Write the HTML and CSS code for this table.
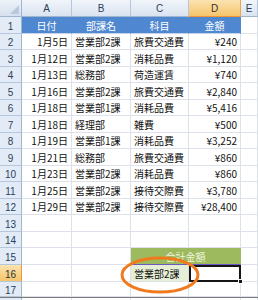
FILE: index.html
```html
<!DOCTYPE html>
<html lang="ja">
<head>
<meta charset="utf-8">
<link rel="stylesheet" href="styles.css">
</head>
<body>
<div class="sheet">
  <div class="corner"><span class="tri"></span></div>
  <div class="ch">A</div><div class="ch">B</div><div class="ch">C</div><div class="ch sel">D</div><div class="ch">E</div>

  <div class="rh">1</div><div class="c hd">日付</div><div class="c hd">部課名</div><div class="c hd">科目</div><div class="c hd">金額</div><div class="c"></div>

  <div class="rh">2</div><div class="c r">1月5日</div><div class="c l">営業部2課</div><div class="c l">旅費交通費</div><div class="c r">¥240</div><div class="c"></div>
  <div class="rh">3</div><div class="c r">1月12日</div><div class="c l">営業部2課</div><div class="c l">消耗品費</div><div class="c r">¥1,120</div><div class="c"></div>
  <div class="rh">4</div><div class="c r">1月13日</div><div class="c l">総務部</div><div class="c l">荷造運賃</div><div class="c r">¥740</div><div class="c"></div>
  <div class="rh">5</div><div class="c r">1月16日</div><div class="c l">営業部2課</div><div class="c l">旅費交通費</div><div class="c r">¥2,840</div><div class="c"></div>
  <div class="rh">6</div><div class="c r">1月18日</div><div class="c l">営業部1課</div><div class="c l">消耗品費</div><div class="c r">¥5,416</div><div class="c"></div>
  <div class="rh">7</div><div class="c r">1月18日</div><div class="c l">経理部</div><div class="c l">雑費</div><div class="c r">¥500</div><div class="c"></div>
  <div class="rh">8</div><div class="c r">1月19日</div><div class="c l">営業部1課</div><div class="c l">消耗品費</div><div class="c r">¥3,252</div><div class="c"></div>
  <div class="rh">9</div><div class="c r">1月21日</div><div class="c l">総務部</div><div class="c l">旅費交通費</div><div class="c r">¥860</div><div class="c"></div>
  <div class="rh">10</div><div class="c r">1月23日</div><div class="c l">営業部2課</div><div class="c l">消耗品費</div><div class="c r">¥860</div><div class="c"></div>
  <div class="rh">11</div><div class="c r">1月25日</div><div class="c l">営業部2課</div><div class="c l">接待交際費</div><div class="c r">¥3,780</div><div class="c"></div>
  <div class="rh">12</div><div class="c r">1月29日</div><div class="c l">営業部2課</div><div class="c l">接待交際費</div><div class="c r">¥28,400</div><div class="c"></div>

  <div class="rh">13</div><div class="c"></div><div class="c"></div><div class="c"></div><div class="c"></div><div class="c"></div>
  <div class="rh">14</div><div class="c"></div><div class="c"></div><div class="c"></div><div class="c"></div><div class="c"></div>
  <div class="rh">15</div><div class="c"></div><div class="c"></div><div class="c total">合計金額</div><div class="c"></div>
  <div class="rh sel">16</div><div class="c"></div><div class="c"></div><div class="c lg">営業部2課</div><div class="c active"><span class="handle"></span></div><div class="c"></div>
  <div class="rh">17</div><div class="c"></div><div class="c"></div><div class="c"></div><div class="c"></div><div class="c"></div>
  <div class="edge"></div>
  <div class="rh">18</div><div class="c"></div><div class="c"></div><div class="c"></div><div class="c"></div><div class="c"></div>

  <svg class="ring" width="258" height="300" viewBox="0 0 258 300">
    <ellipse cx="160" cy="275" rx="38" ry="17" fill="none" stroke="#f07a1e" stroke-width="3"/>
  </svg>
</div>
</body>
</html>
```

FILE: styles.css
```css
* { box-sizing: border-box; }
html, body { margin: 0; padding: 0; background: #fff; }
body { width: 258px; height: 300px; overflow: hidden; }

.sheet {
  position: relative;
  display: grid;
  grid-template-columns: 22px 50px 59px 58px 52px 17px;
  grid-template-rows: 17px 17px 16px 17px 16px 17px 16px 17px 16px 17px 16px 17px 16px 17px 16px 17px 17px 15px 1px 16px;
  font-family: "Noto Sans CJK JP", "Liberation Sans", sans-serif;
  font-size: 10px;
  color: #111;
}

.corner {
  position: relative;
  background: linear-gradient(#eef3fa, #d6e0ee);
  border-right: 1px solid #9eb6ce;
  border-bottom: 1px solid #9eb6ce;
}
.tri {
  position: absolute;
  right: 2px;
  bottom: 2px;
  width: 0;
  height: 0;
  border-left: 9px solid transparent;
  border-bottom: 9px solid #b8c9de;
}

.ch {
  display: flex;
  align-items: center;
  justify-content: center;
  background: linear-gradient(#f1f5fb, #d9e3f0);
  border-right: 1px solid #b5c7dc;
  border-bottom: 1px solid #9eb6ce;
  color: #2b3f5c;
  font-family: "Liberation Sans", sans-serif;
  font-size: 10px;
}
.ch.sel {
  background: linear-gradient(#fbe3b1, #f6c56b);
  border-right-color: #f0a64a;
  border-bottom-color: #f29536;
  color: #333;
}

.rh {
  display: flex;
  align-items: center;
  justify-content: center;
  background: #e3ebf6;
  border-right: 1px solid #9eb6ce;
  border-bottom: 1px solid #b5c7dc;
  color: #2b3f5c;
  font-family: "Liberation Sans", sans-serif;
  font-size: 10px;
  padding-top: 2px;
}
.rh.sel {
  background: linear-gradient(#fbe3b1, #f6c56b);
  border-right-color: #f29536;
  color: #333;
}

.c {
  display: flex;
  align-items: center;
  border-right: 1px solid #dde2ea;
  border-bottom: 1px solid #dde2ea;
  white-space: nowrap;
  overflow: visible;
  padding: 0 3px;
}
.c.r { justify-content: flex-end; }
.c.l { justify-content: flex-start; }

.c.hd {
  justify-content: center;
  background: #4f88d0;
  color: #fff;
  border-right-color: #4f88d0;
  border-bottom-color: #c9d5e6;
}

.c.total {
  grid-column: span 2;
  justify-content: center;
  background: #9dbb5e;
  color: #eef5df;
  border-right-color: #9dbb5e;
  border-bottom: 1px solid #6b58c4;
}

.c.lg {
  background: #e6efd6;
  justify-content: flex-start;
}

.c.active {
  position: relative;
  border: 2px solid #151515;
  background: #fff;
}
.handle {
  position: absolute;
  right: -4px;
  bottom: -4px;
  width: 5px;
  height: 5px;
  background: #151515;
  border: 1px solid #fff;
}

.edge {
  grid-column: 1 / -1;
  background: #7a7a7a;
}

.ring {
  position: absolute;
  left: 0;
  top: 0;
  pointer-events: none;
}
```
